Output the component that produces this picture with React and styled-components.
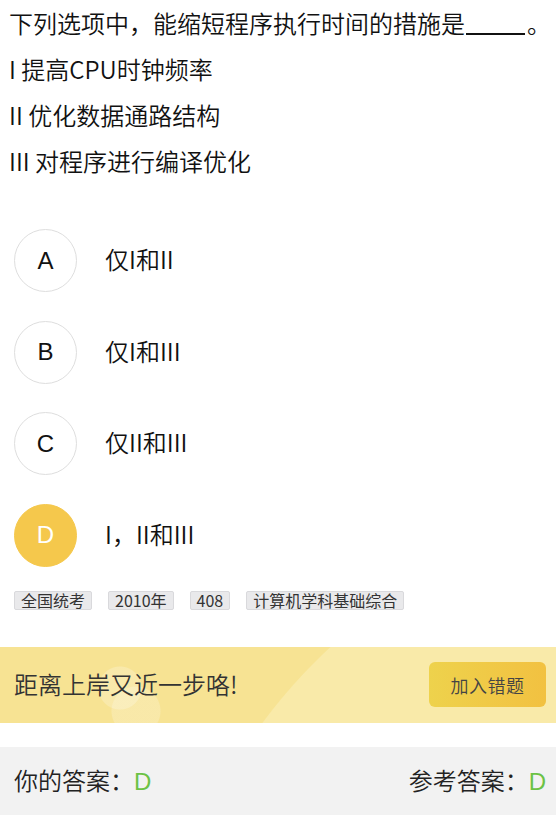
import styled, { createGlobalStyle } from "styled-components";

const GlobalStyle = createGlobalStyle`
  body {
    margin: 0;
    background: #fff;
    font-family: "Noto Sans CJK SC", "Noto Sans", sans-serif;
    font-weight: 350;
    color: #222;
  }
`;

const Page = styled.div`
  width: 556px;
  padding-bottom: 11px;
`;

const Question = styled.div`
  padding: 0 9px;
  font-size: 24px;
  line-height: 46px;
  color: #111;
`;

const Line = styled.p`
  margin: 0;
  white-space: nowrap;
`;

const Blank = styled.span`
  display: inline-block;
  width: 59px;
  height: 30px;
  border-bottom: 2px solid #111;
  vertical-align: -2px;
  margin: 0 2px 0 1px;
`;

const Options = styled.div`
  display: flex;
  flex-direction: column;
  gap: 28.5px;
  padding: 45px 14px 0;
`;

const Option = styled.div`
  display: flex;
  align-items: center;
  gap: 28px;
`;

const Circle = styled.div`
  width: 63px;
  height: 63px;
  box-sizing: border-box;
  border-radius: 50%;
  border: 1px solid ${(p) => (p.$active ? "#f5c84c" : "#dedede")};
  background: ${(p) => (p.$active ? "#f5c84c" : "#fff")};
  color: ${(p) => (p.$active ? "#fff" : "#111")};
  display: flex;
  align-items: center;
  justify-content: center;
  font-family: "Liberation Sans", Arial, sans-serif;
  font-weight: 400;
  font-size: 24px;
`;

const OptionText = styled.span`
  font-size: 24px;
  padding-bottom: 4px;
  color: #111;
`;

const Tags = styled.div`
  display: flex;
  gap: 16px;
  padding: 24px 14px 0;
`;

const Tag = styled.span`
  font-size: 16px;
  font-weight: 400;
  line-height: 17px;
  padding: 0 6px;
  background: #e9e9eb;
  border: 1px solid #d9d9dc;
  border-radius: 2px;
  color: #333;
`;

const Banner = styled.div`
  margin-top: 37px;
  height: 76px;
  display: flex;
  align-items: center;
  justify-content: space-between;
  padding: 0 10px 0 14px;
  background:
    radial-gradient(circle at 120px 41px, rgba(255, 255, 255, 0.22) 0 21px, transparent 22px),
    radial-gradient(circle at 136px 64px, rgba(255, 255, 255, 0.2) 0 24px, transparent 25px),
    radial-gradient(circle at 700px 400px, #f9eaa9 0 544px, transparent 545px),
    #f7e393;
`;

const Slogan = styled.span`
  font-size: 24px;
  padding-bottom: 3px;
  color: #333;
`;

const AddButton = styled.button`
  width: 117px;
  height: 45px;
  border: none;
  border-radius: 6px;
  background: linear-gradient(90deg, #eed24c, #f2c141);
  color: #444;
  font-family: inherit;
  font-weight: 350;
  font-size: 18px;
  letter-spacing: 0.5px;
  cursor: pointer;
`;

const AnswerBar = styled.div`
  margin-top: 24px;
  height: 68px;
  display: flex;
  align-items: center;
  justify-content: space-between;
  padding: 0 10px 3px 14px;
  box-sizing: border-box;
  background: #f2f2f2;
  font-size: 24px;
  color: #222;
`;

const Letter = styled.span`
  font-family: "Liberation Sans", Arial, sans-serif;
  font-weight: 400;
  color: #6cc245;
`;

const options = [
  { key: "A", text: "仅I和II" },
  { key: "B", text: "仅I和III" },
  { key: "C", text: "仅II和III" },
  { key: "D", text: "I，II和III" },
];

const tags = ["全国统考", "2010年", "408", "计算机学科基础综合"];

export default function App() {
  const chosen = "D";
  return (
    <Page>
      <GlobalStyle />
      <Question>
        <Line>
          下列选项中，能缩短程序执行时间的措施是<Blank />。
        </Line>
        <Line>I 提高CPU时钟频率</Line>
        <Line>II 优化数据通路结构</Line>
        <Line>III 对程序进行编译优化</Line>
      </Question>
      <Options>
        {options.map((o) => (
          <Option key={o.key}>
            <Circle $active={o.key === chosen}>{o.key}</Circle>
            <OptionText>{o.text}</OptionText>
          </Option>
        ))}
      </Options>
      <Tags>
        {tags.map((t) => (
          <Tag key={t}>{t}</Tag>
        ))}
      </Tags>
      <Banner>
        <Slogan>距离上岸又近一步咯!</Slogan>
        <AddButton>加入错题</AddButton>
      </Banner>
      <AnswerBar>
        <span>
          你的答案：<Letter>D</Letter>
        </span>
        <span>
          参考答案：<Letter>D</Letter>
        </span>
      </AnswerBar>
    </Page>
  );
}
